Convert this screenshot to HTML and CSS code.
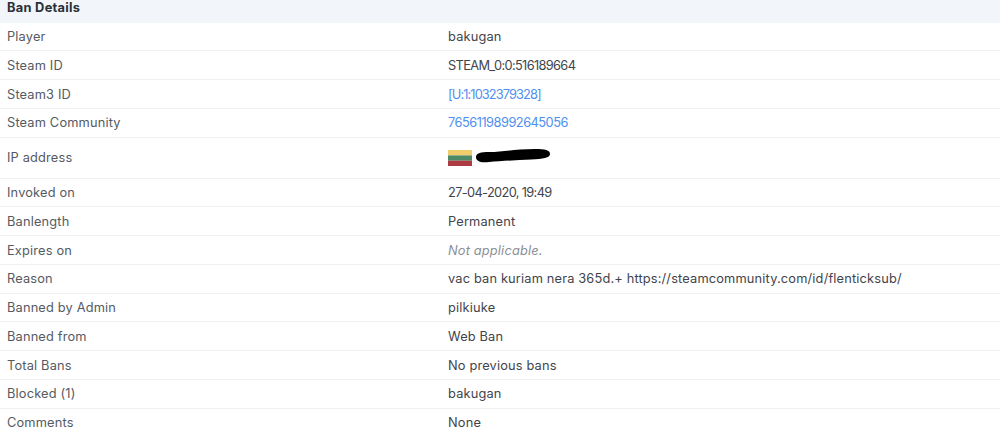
FILE: index.html
```html
<!DOCTYPE html>
<html lang="en">
<head>
<meta charset="utf-8">
<title>Ban Details</title>
<link rel="stylesheet" href="styles.css">
</head>
<body>
<section class="details">
  <h2 class="head">Ban Details</h2>
  <div class="row"><span class="label">Player</span><span class="value">bakugan</span></div>
  <div class="row"><span class="label">Steam ID</span><span class="value tight">STEAM_0:0:516189664</span></div>
  <div class="row"><span class="label">Steam3 ID</span><a class="value link tighter" href="#">[U:1:1032379328]</a></div>
  <div class="row"><span class="label">Steam Community</span><a class="value link num" href="#">76561198992645056</a></div>
  <div class="row row-ip"><span class="label">IP address</span>
    <span class="value ip">
      <svg class="flag" width="24" height="16" viewBox="0 0 24 16" aria-hidden="true"><rect width="24" height="5.4" fill="#f0cc6a"/><rect y="5.4" width="24" height="5.3" fill="#4f8a66"/><rect y="10.7" width="24" height="5.3" fill="#ac3a42"/></svg>
      <svg class="redact" width="76" height="14" viewBox="0 0 76 14" aria-hidden="true"><path d="M1 8C1 4 6 3 14 3C28 3 40 0 60 0C70 0 75 1 75 5C75 9 68 10 56 10.500C42 11 26 12 14 13C5 14 1 12 1 8Z" fill="#000"/></svg>
    </span></div>
  <div class="row"><span class="label">Invoked on</span><span class="value tight">27-04-2020, 19:49</span></div>
  <div class="row"><span class="label">Banlength</span><span class="value">Permanent</span></div>
  <div class="row"><span class="label">Expires on</span><em class="value muted">Not applicable.</em></div>
  <div class="row"><span class="label">Reason</span><span class="value">vac ban kuriam nera 365d.+ https://steamcommunity.com/id/flenticksub/</span></div>
  <div class="row"><span class="label">Banned by Admin</span><span class="value">pilkiuke</span></div>
  <div class="row"><span class="label">Banned from</span><span class="value">Web Ban</span></div>
  <div class="row"><span class="label">Total Bans</span><span class="value">No previous bans</span></div>
  <div class="row"><span class="label">Blocked (1)</span><span class="value">bakugan</span></div>
  <div class="row"><span class="label">Comments</span><span class="value">None</span></div>
</section>
</body>
</html>
```
FILE: styles.css
```css
html, body {
  margin: 0;
  padding: 0;
  background: #fff;
}
body {
  height: 436px;
  overflow: hidden;
  font-family: "Inter", "Liberation Sans", sans-serif;
  font-size: 12.8px;
  letter-spacing: 0.17px;
  color: #4a4f57;
}
.details {
  display: flex;
  flex-direction: column;
}
.head {
  margin: 0;
  height: 22.5px;
  padding: 0 7px;
  background: #f2f6fa;
  font-size: 12.8px;
  line-height: 16px;
  font-weight: 700;
  letter-spacing: 0.3px;
  color: #2c3038;
}
.row {
  display: grid;
  grid-template-columns: 441px 1fr;
  align-items: center;
  height: 28.75px;
  padding: 0.5px 0 0 7px;
  box-sizing: border-box;
  border-bottom: 1px solid #f0f1f3;
}
.row-ip {
  height: 41px;
}
.label {
  color: #555a62;
}
.value {
  color: #3f444c;
}
.tight {
  letter-spacing: -0.64px;
}
.tighter {
  letter-spacing: -0.89px;
}
.num {
  letter-spacing: -0.5px;
}
.link {
  color: #4f8ff0;
  text-decoration: none;
}
.muted {
  color: #8a8f96;
}
.ip {
  display: flex;
  align-items: center;
  gap: 3px;
}
.flag {
  display: block;
}
.redact {
  display: block;
  margin-top: -3px;
}
```
